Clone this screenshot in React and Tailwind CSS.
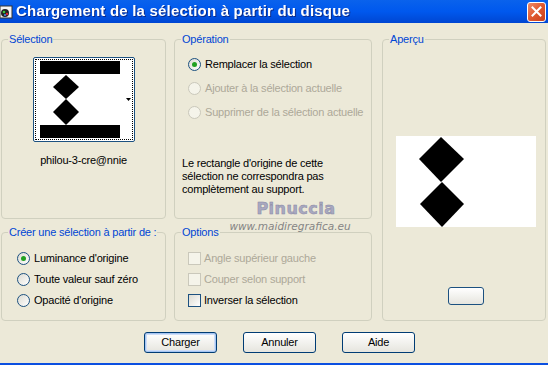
import React from "react";

const ui = { fontFamily: '"Liberation Sans", Arial, sans-serif' };

function Radio({ checked, disabled, label }) {
    return (
        <div className={`flex items-center h-[13px] gap-[4px] ${disabled ? "text-[#ACA899]" : "text-black"}`}>
            <span
                className={`w-[13px] h-[13px] rounded-full border flex items-center justify-center shrink-0 ${
                    disabled ? "border-[#CAC8BB] bg-[#F5F4EA]" : "border-[#1C5180] bg-gradient-to-br from-[#DCDBD2] to-white"
                }`}
            >
                {checked && <span className="w-[5px] h-[5px] rounded-full bg-[#21A121]" />}
            </span>
            <span className="leading-[13px]">{label}</span>
        </div>
    );
}

function Check({ disabled, label }) {
    return (
        <div className={`flex items-center h-[13px] gap-[3px] ${disabled ? "text-[#ACA899]" : "text-black"}`}>
            <span
                className={`w-[13px] h-[13px] border shrink-0 ${
                    disabled ? "border-[#CAC8BB] bg-[#F5F4EA]" : "border-[#1C5180] bg-gradient-to-br from-[#DCDBD2] to-white"
                }`}
            />
            <span className="leading-[13px]">{label}</span>
        </div>
    );
}

function Group({ title, className = "", children }) {
    return (
        <fieldset className={`border border-[#D0D0BF] rounded-[4px] min-w-0 ${className}`}>
            <legend className="ml-[6px] px-[1px] text-[#0046D5] leading-[13px]">{title}</legend>
            {children}
        </fieldset>
    );
}

function Btn({ label, def }) {
    return (
        <button
            className={`w-[73px] h-[21px] rounded-[3px] border border-[#003C74] bg-gradient-to-b from-white to-[#E6E5DE] text-black leading-[19px] ${
                def ? "shadow-[inset_0_0_0_1px_#A6C6F2,inset_0_0_0_2px_#CEDDF7]" : ""
            }`}
        >
            {label}
        </button>
    );
}

export default function App() {
    return (
        <div className="w-[548px] h-[365px] bg-[#ECE9D8] flex flex-col overflow-hidden text-[11px] tracking-[-0.2px]" style={ui}>
            {/* title bar */}
            <div className="h-[23px] shrink-0 bg-gradient-to-b from-[#0A62EC] via-[#0058EE] to-[#0046D2] flex items-center relative">
                <svg width="13" height="14" viewBox="0 0 13 14" className="mt-[1px]">
                    <rect x="0" y="1" width="12" height="12" fill="#F4F4F4" stroke="#333" />
                    <circle cx="5" cy="8" r="4" fill="#222" />
                    <circle cx="4" cy="7" r="1.3" fill="#3CC43C" />
                    <circle cx="7" cy="9" r="1.2" fill="#D23" />
                    <circle cx="5" cy="10" r="1" fill="#4488FF" />
                </svg>
                <span className="ml-[3px] text-white font-bold text-[15px] tracking-[0.2px] drop-shadow-[1px_1px_0_#0A2A8A]">
                    Chargement de la sélection à partir du disque
                </span>
                <div className="ml-auto mr-[2px] w-[19px] h-[20px] rounded-[3px] border border-white bg-gradient-to-br from-[#EC8A68] via-[#E0582E] to-[#C8401C] flex items-center justify-center">
                    <svg width="11" height="11" viewBox="0 0 11 11">
                        <path d="M1.5 1.5 L9.5 9.5 M9.5 1.5 L1.5 9.5" stroke="white" strokeWidth="2" strokeLinecap="square" />
                    </svg>
                </div>
            </div>

            {/* body */}
            <div className="relative grid grid-cols-[165px_198px_166px] grid-rows-[186px_95px] gap-x-[8px] gap-y-[7px] ml-[1px] mt-[10px] [&>*:nth-child(3)]:ml-[2px]">
                <Group title="Sélection" className="flex flex-col items-center">
                    <div className="mt-[11px] w-[102px] h-[85px] border border-[#1C5180] rounded-[2px] bg-white p-[1px]">
                        <div className="w-full h-full border border-dotted border-black relative">
                            <svg width="98" height="81" viewBox="0 0 98 81" className="absolute left-[-1px] top-[-1px]">
                                <rect x="5" y="2" width="80" height="13" fill="#000" />
                                <polygon points="31,16 44,28 31,40 18,28" fill="#000" />
                                <polygon points="31,40 44,53 31,66 18,53" fill="#000" />
                                <rect x="5" y="66" width="80" height="13" fill="#000" />
                                <polygon points="91,39 96,39 93.5,42" fill="#000" />
                            </svg>
                        </div>
                    </div>
                    <div className="mt-[10px] text-black">philou-3-cre@nnie</div>
                </Group>

                <Group title="Opération" className="flex flex-col">
                    <div className="flex flex-col gap-[11px] ml-[13px] mt-[12px]">
                        <Radio checked label="Remplacer la sélection" />
                        <Radio disabled label="Ajouter à la sélection actuelle" />
                        <Radio disabled label="Supprimer de la sélection actuelle" />
                    </div>
                    <p className="ml-[7px] mt-[38px] leading-[13px] text-black">
                        Le rectangle d'origine de cette
                        <br />
                        sélection ne correspondra pas
                        <br />
                        complètement au support.
                    </p>
                </Group>

                <Group title="Aperçu" className="row-span-2 flex flex-col items-center">
                    <div className="mt-[90px] ml-[13px] w-[140px] h-[91px] bg-white self-start">
                        <svg width="140" height="91" viewBox="0 0 140 91">
                            <polygon points="45,1 68,23 45,46 23,23" fill="#000" />
                            <polygon points="46,46 68,68 46,91 24,68" fill="#000" />
                        </svg>
                    </div>
                    <div className="mt-[60px] ml-[4px] w-[36px] h-[18px] rounded-[3px] border border-[#1C5180] bg-gradient-to-b from-white to-[#E6E5DE]" />
                </Group>

                <Group title="Créer une sélection à partir de :" className="flex flex-col">
                    <div className="flex flex-col gap-[8px] ml-[15px] mt-[13px]">
                        <Radio checked label="Luminance d'origine" />
                        <Radio label="Toute valeur sauf zéro" />
                        <Radio label="Opacité d'origine" />
                    </div>
                </Group>

                <Group title="Options" className="flex flex-col">
                    <div className="flex flex-col gap-[8px] ml-[13px] mt-[13px]">
                        <Check disabled label="Angle supérieur gauche" />
                        <Check disabled label="Couper selon support" />
                        <Check label="Inverser la sélection" />
                    </div>
                </Group>

                {/* watermark */}
                <div className="absolute left-[227px] top-[166px] w-[124px] flex flex-col items-center pointer-events-none">
                    <span
                        className="text-[16px] font-bold tracking-[0.5px] text-[#A8A8C0] leading-[20px] ml-[12px]"
                        style={{ fontFamily: '"DejaVu Sans", sans-serif', WebkitTextStroke: "0.5px #8888A4" }}
                    >
                        Pinuccia
                    </span>
                    <span className="text-[10.5px] italic tracking-[0px] text-[#858585] leading-[13px] mt-[1px]" style={{ fontFamily: '"DejaVu Sans", sans-serif' }}>
                        www.maidiregrafica.eu
                    </span>
                </div>
            </div>

            {/* buttons */}
            <div className="flex gap-[26px] ml-[144px] mt-[11px]">
                <Btn label="Charger" def />
                <Btn label="Annuler" />
                <Btn label="Aide" />
            </div>

            <div className="mt-auto h-[2px] bg-[#0B4FE0]" />
        </div>
    );
}
